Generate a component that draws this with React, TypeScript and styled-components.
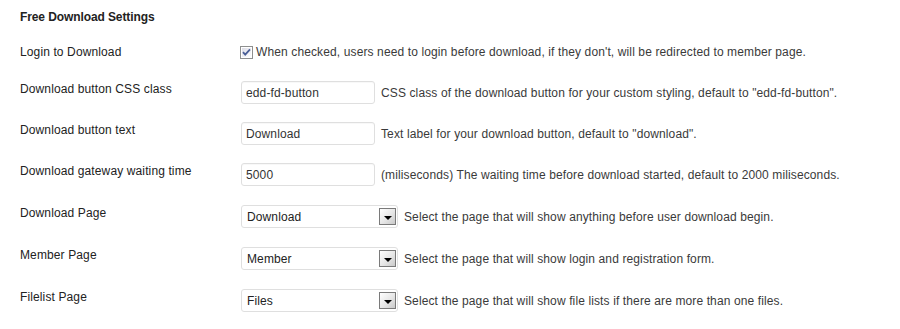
import React from "react";
import styled, { createGlobalStyle } from "styled-components";

const GlobalStyle = createGlobalStyle`
  html, body {
    margin: 0;
    padding: 0;
    background: #ffffff;
  }
  body {
    font-family: "Liberation Sans", Arial, sans-serif;
    font-size: 12px;
    letter-spacing: 0.12px;
    color: #333333;
  }
`;

const Page = styled.div`
  width: 900px;
  height: 329px;
  padding-left: 20px;
  box-sizing: border-box;
  overflow: hidden;
`;

const Heading = styled.h3`
  margin: 0 0 10px 0;
  padding-top: 9px;
  font-size: 12px;
  line-height: 16px;
  font-weight: bold;
  letter-spacing: -0.1px;
  color: #222222;
`;

const Row = styled.div<{ $top?: number; $minHeight?: number }>`
  display: grid;
  grid-template-columns: 221px 1fr;
  align-items: start;
  padding-top: ${(p) => p.$top ?? 9}px;
  padding-bottom: 9px;
  min-height: ${(p) => p.$minHeight ?? 23}px;
`;

const Label = styled.div`
  line-height: 16px;
  color: #222222;
`;

const Field = styled.div`
  display: flex;
  align-items: center;
  gap: 6px;
  min-height: 16px;
`;

const CheckField = styled(Field)`
  gap: 3px;
  margin-left: -1px;
  height: 16px;
`;

const Description = styled.span`
  color: #3a3a3a;
  line-height: 16px;
  white-space: nowrap;
`;

const TextInput = styled.input`
  width: 134px;
  height: 23px;
  box-sizing: border-box;
  margin: 0;
  padding: 0 4px;
  border: 1px solid #dfdfdf;
  border-radius: 3px;
  background: #ffffff;
  box-shadow: inset 0 1px 1px rgba(0, 0, 0, 0.03);
  font-family: "Liberation Sans", Arial, sans-serif;
  font-size: 12px;
  letter-spacing: 0.12px;
  color: #333333;
  outline: none;
`;

const SelectBox = styled.div`
  width: 157px;
  height: 23px;
  box-sizing: border-box;
  display: flex;
  align-items: center;
  justify-content: space-between;
  padding: 0 1px 0 5px;
  border: 1px solid #dfdfdf;
  border-radius: 3px;
  background: #ffffff;
  color: #222222;
`;

const ArrowBox = styled.span`
  width: 17px;
  height: 17px;
  box-sizing: border-box;
  display: flex;
  align-items: center;
  justify-content: center;
  border: 1px solid #7a7a7a;
  background: linear-gradient(135deg, #ffffff 0%, #e6e6e6 55%, #c9c9c9 100%);
  &::after {
    content: "";
    width: 0;
    height: 0;
    margin-top: 2px;
    border-left: 4px solid transparent;
    border-right: 4px solid transparent;
    border-top: 4px solid #000000;
  }
`;

const CheckIcon = () => (
  <svg width="13" height="13" viewBox="0 0 13 13">
    <defs>
      <linearGradient id="cb" x1="0" y1="0" x2="1" y2="1">
        <stop offset="0" stopColor="#dcdce6" />
        <stop offset="1" stopColor="#ffffff" />
      </linearGradient>
    </defs>
    <rect x="0.5" y="0.5" width="12" height="12" fill="#ffffff" stroke="#8e8f8f" />
    <rect x="2" y="2" width="9" height="9" fill="url(#cb)" />
    <path
      d="M3 6.2 L5.2 8.6 L10 3.4"
      fill="none"
      stroke="#4a5f97"
      strokeWidth="1.8"
    />
  </svg>
);

interface SelectRow {
  label: string;
  value: string;
  help: string;
}

const inputRows = [
  {
    label: "Download button CSS class",
    value: "edd-fd-button",
    help: 'CSS class of the download button for your custom styling, default to "edd-fd-button".',
  },
  {
    label: "Download button text",
    value: "Download",
    help: 'Text label for your download button, default to "download".',
  },
  {
    label: "Download gateway waiting time",
    value: "5000",
    help: "(miliseconds) The waiting time before download started, default to 2000 miliseconds.",
  },
];

const selectRows: SelectRow[] = [
  {
    label: "Download Page",
    value: "Download",
    help: "Select the page that will show anything before user download begin.",
  },
  {
    label: "Member Page",
    value: "Member",
    help: "Select the page that will show login and registration form.",
  },
  {
    label: "Filelist Page",
    value: "Files",
    help: "Select the page that will show file lists if there are more than one files.",
  },
];

const App = () => {
  return (
    <>
      <GlobalStyle />
      <Page>
        <Heading>Free Download Settings</Heading>
        <Row $minHeight={19}>
          <Label>Login to Download</Label>
          <CheckField>
            <CheckIcon />
            <Description>
              When checked, users need to login before download, if they don't,
              will be redirected to member page.
            </Description>
          </CheckField>
        </Row>
        {inputRows.map((row) => (
          <Row key={row.label}>
            <Label>{row.label}</Label>
            <Field>
              <TextInput defaultValue={row.value} readOnly />
              <Description>{row.help}</Description>
            </Field>
          </Row>
        ))}
        {selectRows.map((row) => (
          <Row key={row.label} $top={10}>
            <Label>{row.label}</Label>
            <Field>
              <SelectBox>
                <span>{row.value}</span>
                <ArrowBox />
              </SelectBox>
              <Description>{row.help}</Description>
            </Field>
          </Row>
        ))}
      </Page>
    </>
  );
};

export default App;
